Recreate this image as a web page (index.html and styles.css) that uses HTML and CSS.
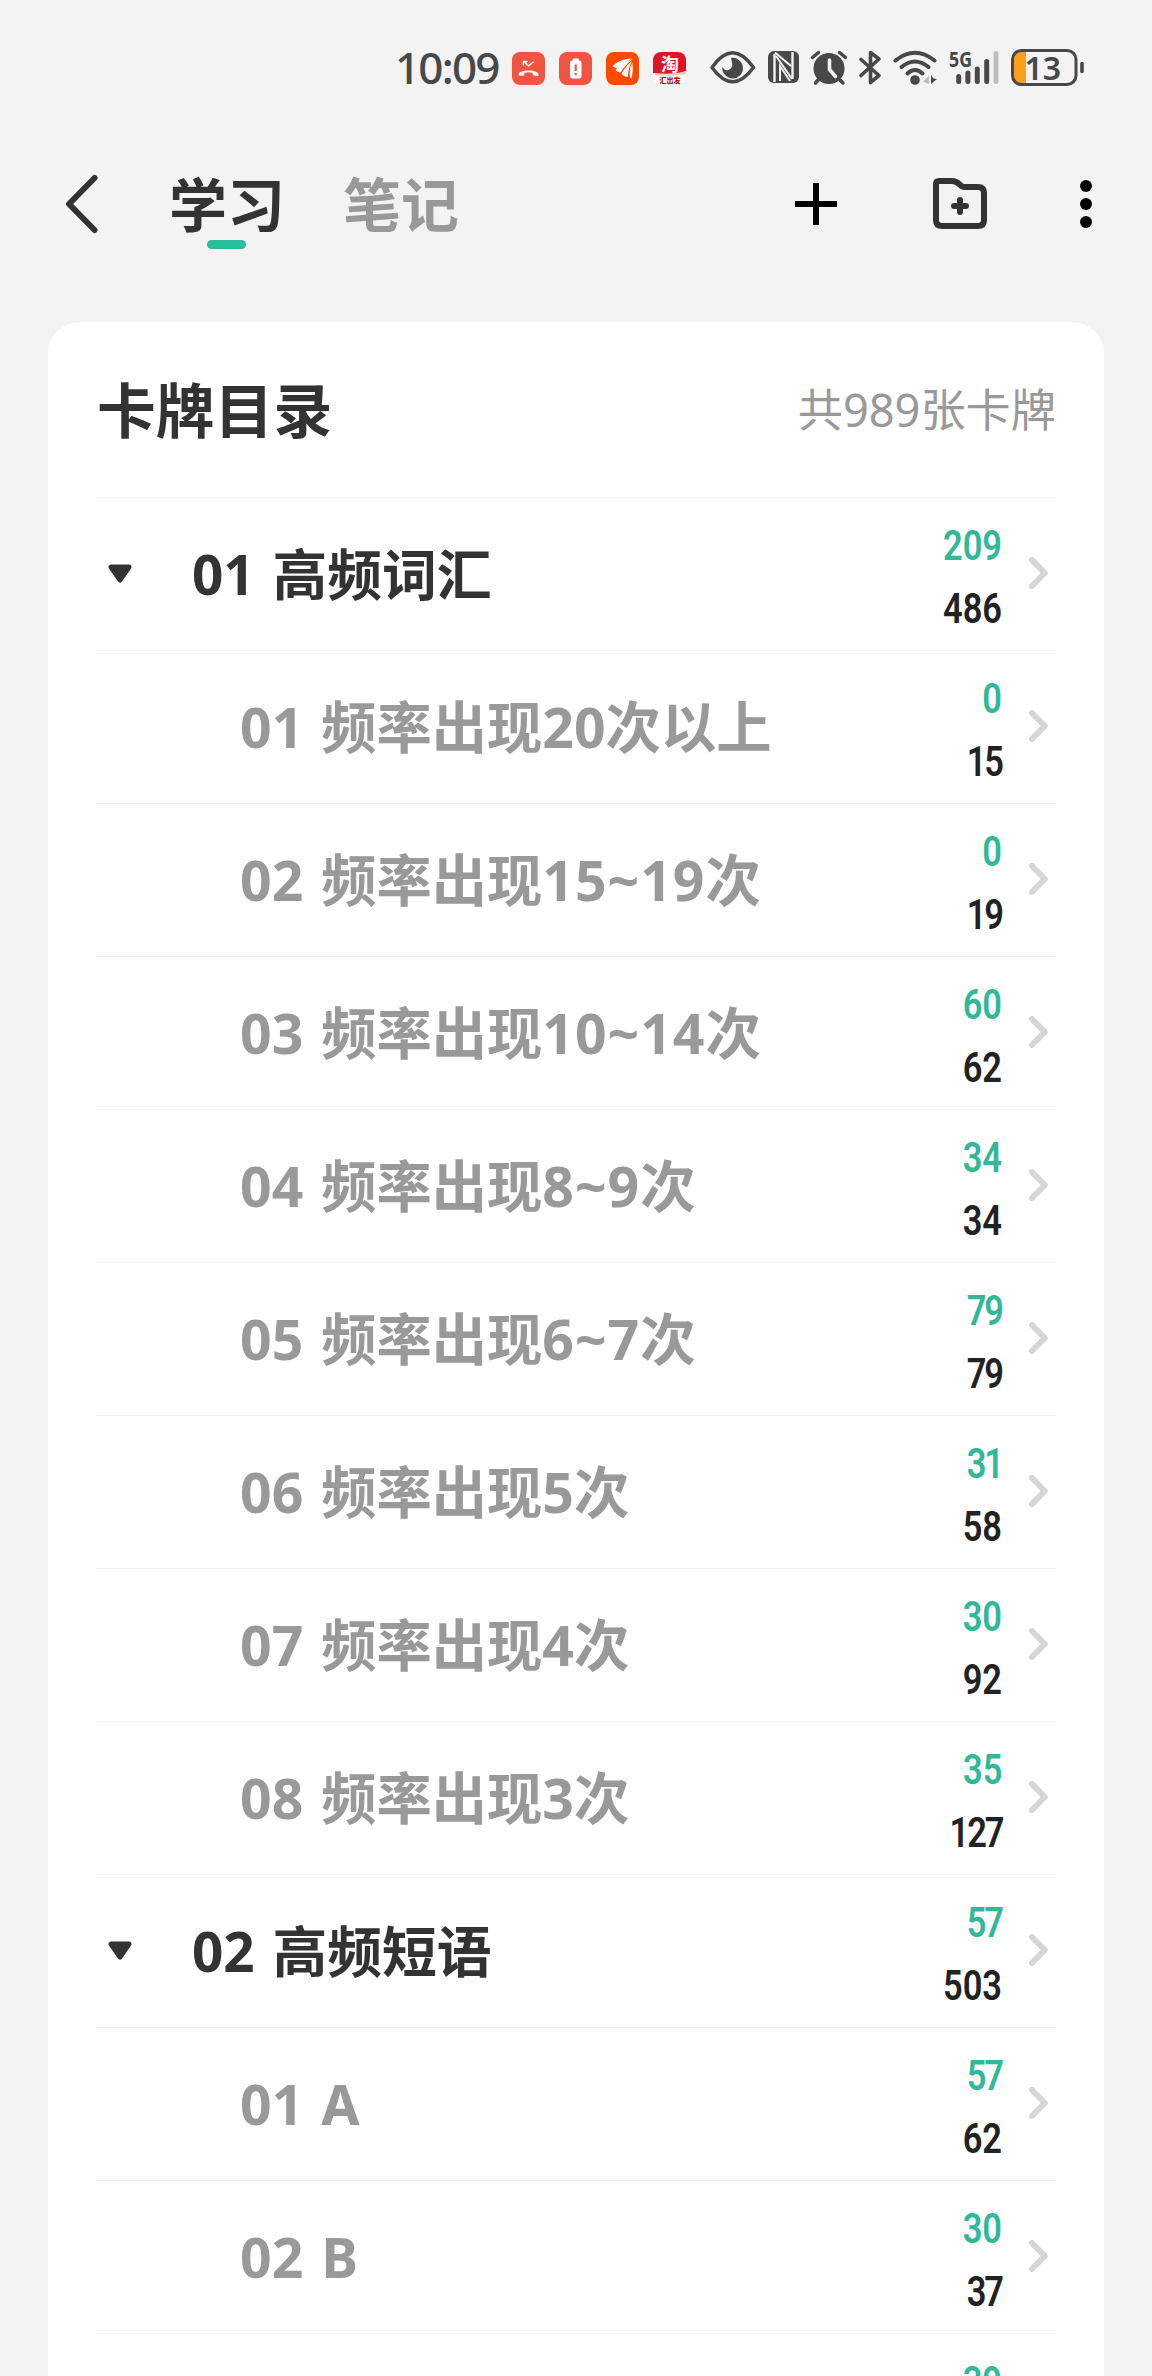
FILE: index.html
```
<!DOCTYPE html>
<html lang="zh-CN">
<head>
<meta charset="utf-8">
<title>卡牌目录</title>
<link rel="stylesheet" href="styles.css">
</head>
<body>
<svg class="defs" width="0" height="0" aria-hidden="true">
<symbol id="go" viewBox="0 0 20 32"><path d="M3 3 15.8 16 3 29"/></symbol>
</svg>
<div class="status">
  <span class="time">10:09</span>
  <div class="apps">
    <svg viewBox="0 0 33 33"><rect class="red" width="33" height="33" rx="8"/><path d="M6.500 23c-1-6 21-6 20 0 0 1.500-1 1.500-5.500.3l-.6-2.500q-3.900-1-7.800 0l-.6 2.500q-4.500 1.200-5.500-.3z" fill="#fff"/><path d="M12.500 9.800l4 4.200 5-4.200M11.500 13.500V9.500h4" fill="none" stroke="#fff" stroke-width="1.500"/></svg>
    <svg viewBox="0 0 33 33"><rect class="red" width="33" height="33" rx="8"/><rect x="11" y="8.500" width="11.500" height="18" rx="2.200" fill="#fff"/><rect x="13.700" y="6.500" width="6" height="3" rx="1" fill="#fff"/><path d="M16.700 12.500v6.500M16.700 21v2.200" stroke="#ef5542" stroke-width="2.200"/></svg>
    <svg viewBox="0 0 33 33"><rect width="33" height="33" rx="8" fill="#ff4a00"/><path d="M6.500 14.500C10 10 17 7 26.500 6.500 20 9 15 12 11 16.200zM9.500 18c4-5 9.500-9 17-10.500-5 3.500-9 8-12 13-1.500.2-3.500-.8-5-2.500zM15.500 22C18 17 21.500 12.500 26 9c-3 5-4 10-4 16-2.500 0-5-1-6.500-3zM24 25.500c-.8-6 0-11 2.300-15 .7 5 .8 11-1 16z" fill="#fff"/></svg>
    <svg viewBox="0 0 33 33"><clipPath id="c"><rect width="33" height="33" rx="8"/></clipPath><g clip-path="url(#c)"><path fill="#fafafa" d="M0 0h33v33H0z"/><path d="M0 0h33v19q-12 4-33 2z" fill="#df1428"/><path d="M2 21q16 4 31-2v3q-14 3-31 1z" fill="#f3c5a0"/></g><text x="8" y="18.500" class="tao">淘</text><text x="6.500" y="30.500" class="promo">汇出发</text></svg>
  </div>
  <svg class="sys" viewBox="708 46 378 42" width="378" height="42">
    <g class="line"><path d="M712 67.500Q732.500 38 753.500 67.500 732.500 96 712 67.500z" stroke-width="3.400"/></g>
    <path class="ink" d="M731 58a10.300 10.300 0 1 1-8.500 8.500q1.500 4.500 6 3.500 5-2 3.500-7.500-.4-2.500-1-4.500z"/>
    <rect class="ink" x="768" y="51" width="31" height="32" rx="6"/>
    <path d="M774.500 82V54M792.500 52V79" fill="none" stroke="#f3f3f3" stroke-width="2.400"/>
    <path d="M775 52.500 791 66M776 56l16 23M780 81V66l10 15" fill="none" stroke="#f3f3f3" stroke-width="2"/>
    <circle class="ink" cx="829" cy="68.500" r="15.500"/>
    <g class="line"><path d="M812.500 57.500 818.500 52.500M839.500 52.500l6 5M818.500 79.500 815.500 83M839.500 79.500l3.500 3.500" stroke-width="3.500"/><path d="M861 59.500 879 75.500 870.500 82.500V52.500L879 59 861 75.500" stroke-width="3.600"/></g>
    <path d="M829.500 60v9.500l6 7" fill="none" stroke="#f3f3f3" stroke-width="3.600" stroke-linecap="round"/>
    <g class="line"><path d="M895.500 60.500q19.500-15.500 39 0M901.500 67q13.500-11 27 0M907.500 73.500q7.500-7 15 0" stroke-width="4"/></g>
    <circle class="ink" cx="915" cy="80" r="4.800"/>
    <path d="M929 76v8l-6-2.500z" fill="#bbb"/><path class="ink" d="M931 75v9l6-5-3.500-.5z"/>
    <text x="949" y="67" class="net" textLength="23" lengthAdjust="spacingAndGlyphs">5G</text>
    <g class="line" stroke-width="5"><path d="M958.700 76.500V81.500M967.900 73v8.500M977.300 69v12.500M986.700 61.500v20"/><path d="M996 53.500v28" stroke="#bdbdbd"/></g>
    <path d="M1026 51v33h-6q-7.500 0-7.500-8V59q0-8 7.500-8z" fill="#ff9f1c"/>
    <rect x="1012.500" y="50.500" width="63.500" height="34" rx="9" fill="none" stroke="#47484a" stroke-width="3"/>
    <path d="M1082 63.500v8" class="line" stroke-width="3.600"/>
    <text x="1024.500" y="79.500" class="pct">13</text>
  </svg>
</div>
<nav class="nav">
  <svg class="back" viewBox="0 0 36 60" width="36" height="60"><path d="M30.500 4 5 30l25.500 26"/></svg>
  <div class="tabs"><span class="tab active">学习</span><span class="tab">笔记</span></div>
  <svg class="add" viewBox="0 0 42 42" width="42" height="42"><path d="M21 0v42M0 21h42" stroke="#000" stroke-width="6"/></svg>
  <svg class="folder" viewBox="0 0 54 52" width="54" height="52"><path d="M3 6q0-3 3-3h13c8 0 7 6 12 6h14q6 0 6 6v27q0 6-6 6H9q-6 0-6-6zM27 22v12M21 28h12"/></svg>
  <svg class="more" viewBox="0 0 12 48" width="12" height="48"><circle cx="6" cy="6" r="6"/><circle cx="6" cy="24" r="6"/><circle cx="6" cy="42" r="6"/></svg>
</nav>
<main class="card">
  <header class="head"><h1>卡牌目录</h1><span class="total">共989张卡牌</span></header>
  <ul class="list">
    <li class="row group"><svg class="tri" viewBox="0 0 24 20"><path d="M3 3h18l-9 13z"/></svg><span class="name">01 高频词汇</span><span class="nums"><b>209</b><i>486</i></span><svg class="go"><use href="#go"/></svg></li>
    <li class="row"><span class="name">01 频率出现20次以上</span><span class="nums"><b>0</b><i class="tight">15</i></span><svg class="go"><use href="#go"/></svg></li>
    <li class="row"><span class="name">02 频率出现<span class="range">15~19</span>次</span><span class="nums"><b>0</b><i class="tight">19</i></span><svg class="go"><use href="#go"/></svg></li>
    <li class="row"><span class="name">03 频率出现<span class="range">10~14</span>次</span><span class="nums"><b>60</b><i>62</i></span><svg class="go"><use href="#go"/></svg></li>
    <li class="row"><span class="name">04 频率出现<span class="range">8~9</span>次</span><span class="nums"><b>34</b><i>34</i></span><svg class="go"><use href="#go"/></svg></li>
    <li class="row"><span class="name">05 频率出现<span class="range">6~7</span>次</span><span class="nums"><b class="tight">79</b><i class="tight">79</i></span><svg class="go"><use href="#go"/></svg></li>
    <li class="row"><span class="name">06 频率出现5次</span><span class="nums"><b class="tight">31</b><i>58</i></span><svg class="go"><use href="#go"/></svg></li>
    <li class="row"><span class="name">07 频率出现4次</span><span class="nums"><b>30</b><i>92</i></span><svg class="go"><use href="#go"/></svg></li>
    <li class="row"><span class="name">08 频率出现3次</span><span class="nums"><b>35</b><i class="tight">127</i></span><svg class="go"><use href="#go"/></svg></li>
    <li class="row group"><svg class="tri" viewBox="0 0 24 20"><path d="M3 3h18l-9 13z"/></svg><span class="name">02 高频短语</span><span class="nums"><b class="tight">57</b><i>503</i></span><svg class="go"><use href="#go"/></svg></li>
    <li class="row"><span class="name">01 A</span><span class="nums"><b class="tight">57</b><i>62</i></span><svg class="go"><use href="#go"/></svg></li>
    <li class="row"><span class="name">02 B</span><span class="nums"><b>30</b><i class="tight">37</i></span><svg class="go"><use href="#go"/></svg></li>
    <li class="row"><span class="nums"><b>39</b></span></li>
  </ul>
</main>
</body>
</html>
```
FILE: styles.css
```
* { box-sizing: border-box; }
body {
  margin: 0;
  width: 1152px;
  height: 2376px;
  overflow: hidden;
  background: #f3f3f3;
  color: #333;
  font-family: "Noto Sans", "Noto Sans CJK SC", sans-serif;
}
svg { display: block; flex: none; }
.defs { position: absolute; }

/* status bar */
.status { display: flex; align-items: flex-start; height: 135px; padding: 46px 0 0 395px; }
.time { width: 117px; height: 42px; font-size: 44px; line-height: 43px; font-weight: 500; color: #47484a; white-space: nowrap; letter-spacing: -1.800px; }
.apps { display: flex; gap: 14px; padding-top: 6px; margin-right: 22px; }
.apps svg { width: 33px; height: 33px; }
.red { fill: #ef5542; }
.tao { font-size: 18px; font-weight: 700; fill: #fff; }
.promo { font-size: 7px; font-weight: 900; fill: #c8101e; }
.ink { fill: #47484a; }
.line { fill: none; stroke: #47484a; stroke-linecap: round; stroke-linejoin: round; }
.net { font-size: 21px; font-weight: 700; fill: #47484a; }
.pct { font-size: 32px; font-weight: 600; fill: #47484a; }

/* top navigation */
.nav { display: flex; align-items: center; height: 138px; padding-left: 64px; }
.back { fill: none; stroke: #333; stroke-width: 6; stroke-linecap: round; stroke-linejoin: round; }
.tabs { display: flex; gap: 58px; width: 625px; margin-left: 69px; padding-top: 2px; }
.tab { position: relative; font-size: 58px; line-height: 80px; font-weight: 700; color: #999; }
.active { color: #333; }
.active::after { content: ""; position: absolute; left: 38px; bottom: -4px; width: 39px; height: 9px; border-radius: 5px; background: #28be9c; }
.add { margin-right: 96px; margin-left: 1px; }
.folder { fill: none; stroke: #333; stroke-width: 6; stroke-linecap: round; margin-right: 93px; }

/* card directory */
.card { width: 1056px; height: 2100px; margin: 49px 0 0 48px; padding: 0 48px; border-radius: 32px; background: #fff; }
.head { display: flex; justify-content: space-between; align-items: center; height: 175px; padding: 1px 0 0 1px; }
h1 { margin: 0; font-size: 58.800px; line-height: 80px; font-weight: 700; }
.total { font-size: 45.200px; line-height: 60px; color: #999; }
.list { margin: 0; padding: 0; list-style: none; }
.row { display: flex; align-items: center; height: 153px; border-top: 1px solid #f3f3f3; padding: 0 7px 0 144px; }
.row.group { padding-left: 12px; }
.tri { width: 24px; height: 20px; fill: #333; stroke: #333; stroke-width: 5; stroke-linejoin: round; margin-right: 60px; }
.name { font-size: 55.300px; line-height: 76px; font-weight: 700; color: #999; white-space: nowrap; word-spacing: 3.500px; }
.group .name { color: #333; font-size: 54.800px; }
.range { letter-spacing: 1px; }
.nums { display: flex; flex-direction: column; gap: 3px; margin: 6px 0 0 auto; height: 123px; text-align: right; font: 600 42px/60px Roboto, sans-serif; transform: scaleX(.82); transform-origin: right; }
.nums b { font-weight: 600; color: #31b898; }
.nums i { font-style: normal; color: #222; }
.nums .tight { letter-spacing: -2.500px; padding-right: 2.500px; }
.nums b.tight, .nums i.tight { margin-right: -2.500px; }
.go { width: 20px; height: 32px; margin: -2px 0 0 27px; fill: none; stroke: #d6d6d6; stroke-width: 6; stroke-linecap: round; stroke-linejoin: round; }
.row:last-child { padding-right: 54px; }
```
